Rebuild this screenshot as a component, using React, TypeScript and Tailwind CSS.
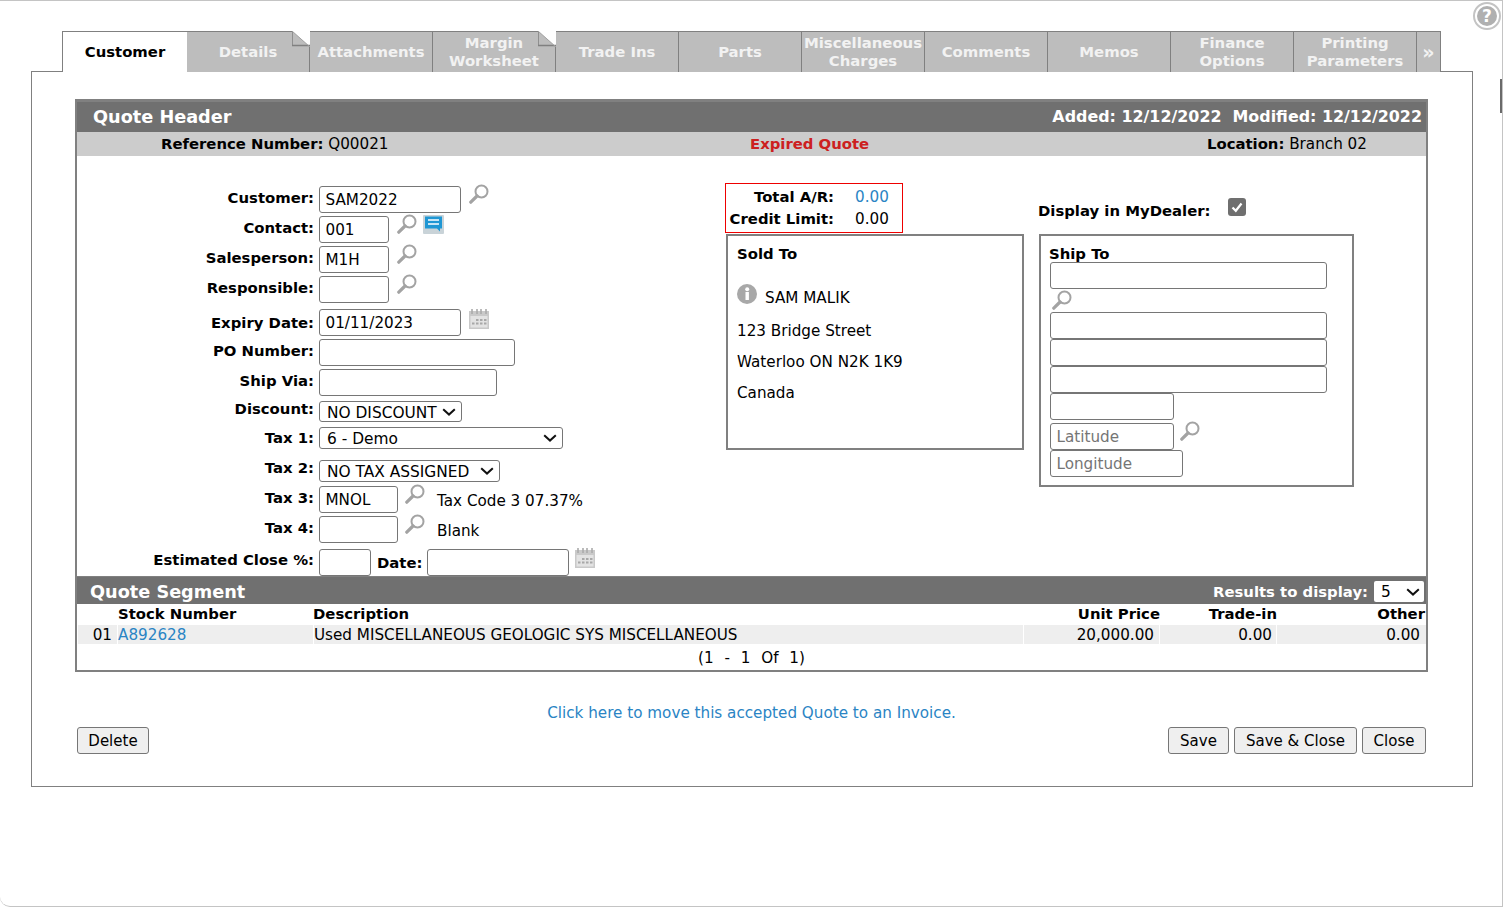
import React from 'react';

const tabs = [
  { label: ['Details'], fold: true, w: 'w-[123px]' },
  { label: ['Attachments'], w: 'w-[123px]' },
  { label: ['Margin', 'Worksheet'], fold: true, w: 'w-[123px]' },
  { label: ['Trade Ins'], w: 'w-[123px]' },
  { label: ['Parts'], w: 'w-[123px]' },
  { label: ['Miscellaneous', 'Charges'], w: 'w-[123px]' },
  { label: ['Comments'], w: 'w-[123px]' },
  { label: ['Memos'], w: 'w-[123px]' },
  { label: ['Finance', 'Options'], w: 'w-[123px]' },
  { label: ['Printing', 'Parameters'], w: 'w-[123px]' },
  { label: ['»'], w: 'w-[24px] text-[19px]' },
];

function Lens({ className = '' }: { className?: string }) {
  return (
    <svg viewBox="0 0 20 20" className={`h-5 w-5 shrink-0 ${className}`} fill="none">
      <circle cx="12.5" cy="7.5" r="6" stroke="#a3a3a3" strokeWidth="2" />
      <path d="M8 12 L1.8 18.2" stroke="#a3a3a3" strokeWidth="3.2" strokeLinecap="round" />
    </svg>
  );
}

function Calendar({ className = '' }: { className?: string }) {
  return (
    <svg viewBox="0 0 20 20" className={`h-5 w-5 shrink-0 ${className}`}>
      <rect x="0" y="2" width="20" height="18" fill="#c9c9c9" />
      <path d="M3 0v5M8 0v5M12 0v5M17 0v5" stroke="#ababab" strokeWidth="1.6" />
      <rect x="1.5" y="7" width="17" height="11.5" fill="#e3e3e3" />
      <path d="M7 10h2.5v2H7zM11 10h2.5v2H11zM15 10h2.5v2H15zM3 13.5h2.5v2H3zM7 13.5h2.5v2H7zM11 13.5h2.5v2H11zM15 13.5h2.5v2H15z" fill="#a8a8a8" />
    </svg>
  );
}

function Chevron({ className = '' }: { className?: string }) {
  return (
    <svg viewBox="0 0 14 8" className={`pointer-events-none absolute top-1/2 h-2 w-[14px] -translate-y-1/2 ${className}`} fill="none">
      <path d="M1.2 1.2L7 6.6L12.8 1.2" stroke="#111" strokeWidth="2" />
    </svg>
  );
}

function Field({ w, value = '', placeholder }: { w: string; value?: string; placeholder?: string }) {
  return (
    <input
      readOnly
      value={value}
      placeholder={placeholder}
      className={`${w} h-[27px] shrink-0 rounded-[3px] border border-[#767676] bg-white px-[5.5px] text-[15.2px] text-black placeholder:text-[#757575]`}
    />
  );
}

function Picker({ w, h, value }: { w: string; h: string; value: string }) {
  return (
    <div className={`relative shrink-0 ${w} ${h}`}>
      <select
        defaultValue={value}
        className="h-full w-full appearance-none rounded-[3px] border border-[#767676] bg-white pl-[7px] text-[15.4px] text-black"
      >
        <option>{value}</option>
      </select>
      <Chevron className="right-[6px]" />
    </div>
  );
}

function Row({ label, top, children, pt = 'pt-[3px]' }: { label: string; top: string; children: React.ReactNode; pt?: string }) {
  return (
    <div className={`flex items-start ${top}`}>
      <label className={`w-[237px] shrink-0 text-right text-[14.85px] font-bold leading-[18px] ${pt}`}>{label}</label>
      <div className="ml-[5px] flex items-start">{children}</div>
    </div>
  );
}

function Btn({ w, children }: { w: string; children: React.ReactNode }) {
  return (
    <button className={`${w} h-[27px] rounded-[3px] border border-[#767676] bg-[#efefef] pt-[2px] text-[15px] text-black`}>{children}</button>
  );
}

export default function App() {
  return (
    <div className="relative h-[907px] w-[1503px] overflow-hidden rounded-bl-[10px] border-t border-r border-b border-[#c4c4c4] bg-white [font-family:DejaVu_Sans,sans-serif] text-[15.2px] text-black [&_b]:text-[14.85px]">
      <svg viewBox="0 0 30 30" className="absolute right-0 top-0 h-[30px] w-[30px]">
        <circle cx="15" cy="15" r="13" fill="#fff" stroke="#c4c4c4" strokeWidth="2" />
        <circle cx="15" cy="15" r="10" fill="#b0b0b0" />
        <text x="15" y="21" textAnchor="middle" fontSize="17" fontWeight="700" fill="#fff" fontFamily="DejaVu Sans">?</text>
      </svg>
      <div className="absolute right-0 top-[78px] h-[34px] w-[2px] bg-[#6a6a6a]" />

      <div className="ml-[62px] mt-[30px] flex h-[41px] w-[1379px]">
        <div className="z-10 flex h-[41px] w-[125px] items-center justify-center border-l border-t border-[#808080] bg-white text-[14.85px] font-bold">Customer</div>
        {tabs.map((t) => (
          <div
            key={t.label[0]}
            className={`relative flex flex-col items-center justify-center border-r border-t border-[#808080] bg-[#bdbdbd] text-[14.85px] font-bold leading-[18px] text-[#f2f2f2] ${t.w}`}
          >
            {t.label.map((l) => (
              <span key={l} className="whitespace-nowrap">{l}</span>
            ))}
            {t.fold && (
              <svg viewBox="0 0 18 16" className="absolute right-[-1px] top-[-1px] h-4 w-[18px]">
                <path d="M0 0H18V16Z" fill="#fff" />
                <path d="M0 0V14.5H18" fill="none" stroke="#808080" strokeWidth="1.5" />
                <path d="M0 0L18 16" stroke="#a0a0a0" strokeWidth="1" />
              </svg>
            )}
          </div>
        ))}
      </div>

      <div className="-mt-px ml-[31px] h-[716px] w-[1442px] border border-[#808080] bg-white pl-[43px] pr-[44px] pt-[27px]">
        <div className="h-[573px] border-2 border-t-[3px] border-[#808080]">
          <div className="flex h-[30px] items-center justify-between bg-[#707070] pl-[16px] pr-[4px] font-bold text-white">
            <span className="text-[17.7px]">Quote Header</span>
            <span className="text-[15.9px]">Added: 12/12/2022&nbsp; Modified: 12/12/2022</span>
          </div>
          <div className="relative flex h-[24px] items-center bg-[#cccccc]">
            <span className="pl-[84px]"><b>Reference Number:</b> Q00021</span>
            <b className="absolute left-[673px] font-bold text-[#cc2020]">Expired Quote</b>
            <span className="absolute left-[1130px]"><b>Location:</b> Branch 02</span>
          </div>

          <div className="flex h-[420px]">
            <div className="w-[648px] shrink-0 pt-[30px]">
              <Row label="Customer:" top="">
                <Field w="w-[142px]" value="SAM2022" />
                <Lens className="ml-2 -mt-[2px]" />
              </Row>
              <Row label="Contact:" top="mt-[3px]">
                <Field w="w-[70px]" value="001" />
                <Lens className="ml-2 -mt-[2px]" />
                <svg viewBox="0 0 21 19" className="ml-[6px] -mt-px h-[19px] w-[21px]">
                  <rect width="21" height="19" rx="1" fill="#c9d3d8" />
                  <path d="M2 1.5H19V13.5H17V16.5L14 13.5H2Z" fill="#1f97d4" />
                  <path d="M5 5H16M5 9H16" stroke="#fff" strokeWidth="1.4" />
                </svg>
              </Row>
              <Row label="Salesperson:" top="mt-[3px]">
                <Field w="w-[70px]" value="M1H" />
                <Lens className="ml-2 -mt-[2px]" />
              </Row>
              <Row label="Responsible:" top="mt-[3px]">
                <Field w="w-[70px]" />
                <Lens className="ml-2 -mt-[2px]" />
              </Row>
              <Row label="Expiry Date:" top="mt-[6px]" pt="pt-[5px]">
                <Field w="w-[142px]" value="01/11/2023" />
                <Calendar className="ml-2" />
              </Row>
              <Row label="PO Number:" top="mt-[3px]">
                <Field w="w-[196px]" />
              </Row>
              <Row label="Ship Via:" top="mt-[3px]">
                <Field w="w-[178px]" />
              </Row>
              <Row label="Discount:" top="mt-[5px]" pt="-mt-px">
                <Picker w="w-[143px]" h="h-[21px]" value="NO DISCOUNT" />
              </Row>
              <Row label="Tax 1:" top="mt-[5px]" pt="pt-[2px]">
                <Picker w="w-[244px]" h="h-[22px]" value="6 - Demo" />
              </Row>
              <Row label="Tax 2:" top="mt-[11px]" pt="-mt-px">
                <Picker w="w-[181px]" h="h-[22px]" value="NO TAX ASSIGNED" />
              </Row>
              <Row label="Tax 3:" top="mt-[4px]">
                <Field w="w-[79px]" value="MNOL" />
                <Lens className="ml-[7px] -mt-[2px]" />
                <span className="ml-[12px] pt-[6px] leading-[18px]">Tax Code 3 07.37%</span>
              </Row>
              <Row label="Tax 4:" top="mt-[3px]">
                <Field w="w-[79px]" />
                <Lens className="ml-[7px] -mt-[2px]" />
                <span className="ml-[12px] pt-[6px] leading-[18px]">Blank</span>
              </Row>
              <Row label="Estimated Close %:" top="mt-[6px]" pt="pt-[2px]">
                <Field w="w-[52px]" />
                <b className="ml-[6px] mr-[5px] pt-[5px] leading-[18px]">Date:</b>
                <Field w="w-[142px]" />
                <Calendar className="ml-[6px] -mt-[1px]" />
              </Row>
            </div>

            <div className="w-[313px] shrink-0 pt-[27px]">
              <div className="grid h-[50px] w-[178px] grid-cols-[108px_1fr] content-center gap-x-[21px] gap-y-[4px] border border-[#ee0000] leading-[18px]">
                <b className="text-right">Total A/R:</b>
                <span className="text-[#2a84c4]">0.00</span>
                <b className="text-right">Credit Limit:</b>
                <span>0.00</span>
              </div>
              <div className="ml-px mt-px h-[216px] w-[298px] border-2 border-[#808080] pl-[9px] pt-[9px] leading-[18px]">
                <b>Sold To</b>
                <div className="mt-[26px] flex items-start">
                  <svg viewBox="0 0 20 20" className="-mt-[5px] mr-[8px] h-5 w-5">
                    <circle cx="10" cy="10" r="10" fill="#a8a8a8" />
                    <rect x="8.5" y="8" width="3.4" height="8" fill="#fff" />
                    <circle cx="10.2" cy="5.3" r="2" fill="#fff" />
                  </svg>
                  SAM MALIK
                </div>
                <div className="mt-[15px]">123 Bridge Street</div>
                <div className="mt-[13px]">Waterloo ON N2K 1K9</div>
                <div className="mt-[13px]">Canada</div>
              </div>
            </div>

            <div className="pt-[41px]">
              <div className="flex h-[37px] items-start">
                <b className="pt-[5px] leading-[18px]">Display in MyDealer:</b>
                <span className="ml-[18px] mt-px flex h-[18px] w-[18px] items-center justify-center rounded-[3px] bg-[#6f6f6f]">
                  <svg viewBox="0 0 14 14" className="h-[14px] w-[14px]" fill="none">
                    <path d="M2.5 7.5L5.8 10.8L11.5 3.5" stroke="#fff" strokeWidth="2.2" />
                  </svg>
                </span>
              </div>
              <div className="ml-px h-[253px] w-[315px] border-2 border-[#808080] pl-[9px] pt-[9px]">
                <b className="-ml-px block leading-[18px]">Ship To</b>
                <Field w="w-[277px] block -mt-px" />
                <Lens className="ml-[2px] mt-[1px] block" />
                <Field w="w-[277px] block mt-[2px]" />
                <Field w="w-[277px] block" />
                <Field w="w-[277px] block" />
                <Field w="w-[124px] block" />
                <div className="mt-[3px] flex items-start">
                  <Field w="w-[124px]" placeholder="Latitude" />
                  <Lens className="ml-[6px] -mt-[2px]" />
                </div>
                <Field w="w-[133px] block" placeholder="Longitude" />
              </div>
            </div>
          </div>

          <div className="flex h-[28px] items-center justify-between border-t border-[#808080] bg-[#707070] pl-[13px] pr-[2px] pt-[3px] font-bold text-white">
            <span className="text-[17.7px]">Quote Segment</span>
            <span className="flex items-center text-[14.85px]">
              Results to display:
              <span className="relative ml-[6px] h-[21px] w-[50px]">
                <select defaultValue="5" className="h-full w-full appearance-none rounded-[2px] bg-white pl-[7px] text-[15.4px] font-normal text-black">
                  <option>5</option>
                </select>
                <Chevron className="right-[4px]" />
              </span>
            </span>
          </div>

          <div className="grid h-[21px] grid-cols-[41px_195px_711px_136px_117px_1fr] items-center pb-px pr-px text-[14.85px] font-bold leading-[18px]">
            <span />
            <span>Stock Number</span>
            <span>Description</span>
            <span className="text-right">Unit Price</span>
            <span className="text-right">Trade-in</span>
            <span className="text-right">Other</span>
          </div>
          <div className="grid h-[18px] grid-cols-[39px_195px_709px_135px_116px_1fr] gap-x-px pl-px leading-[18px] [&>*]:bg-[#eeeeee] [&>*]:pt-px">
            <span className="pr-[5px] text-right">01</span>
            <span className="text-[#2a84c4]">A892628</span>
            <span>Used MISCELLANEOUS GEOLOGIC SYS MISCELLANEOUS</span>
            <span className="pr-[5px] text-right">20,000.00</span>
            <span className="pr-[4px] text-right">0.00</span>
            <span className="pr-[6px] text-right">0.00</span>
          </div>
          <div className="pt-[6px] text-center leading-[18px] [word-spacing:6px]">(1 - 1 Of 1)</div>
        </div>

        <div className="mt-[32px] text-center leading-[18px] text-[#2a84c4]">Click here to move this accepted Quote to an Invoice.</div>
        <div className="mt-[5px] flex px-[2px]">
          <Btn w="w-[72px]">Delete</Btn>
          <div className="ml-auto flex gap-[5px]">
            <Btn w="w-[61px]">Save</Btn>
            <Btn w="w-[123px]">Save &amp; Close</Btn>
            <Btn w="w-[64px]">Close</Btn>
          </div>
        </div>
      </div>
    </div>
  );
}
